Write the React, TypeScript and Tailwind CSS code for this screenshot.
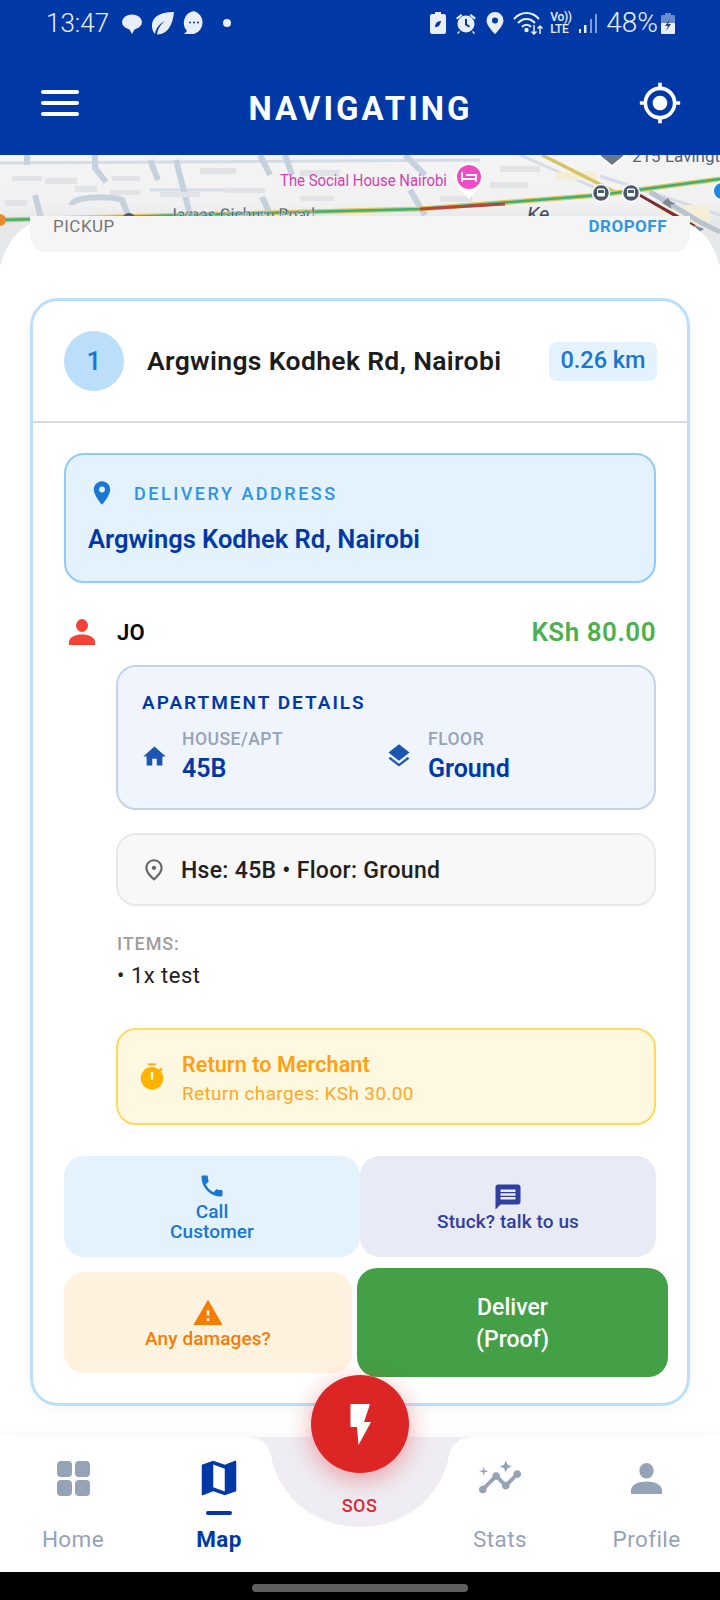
import { MdGpsFixed, MdLocationOn, MdHome, MdLayers, MdOutlinePlace, MdTimer, MdPhone, MdMessage, MdWarning, MdMap, MdInsights } from 'react-icons/md';

function PersonIcon({ className }: { className?: string }) {
  return (
    <svg viewBox="0 0 26 26" className={className} fill="currentColor">
      <ellipse cx="13" cy="6.5" rx="6" ry="6.5" />
      <path d="M0 23c0-5 6.500-7.500 13-7.500S26 18 26 23v3H0z" />
    </svg>
  );
}

function MapBackdrop() {
  return (
    <svg width="720" height="110" viewBox="0 155 720 110" className="absolute left-0 top-0">
      <defs>
        <linearGradient id="shade" x1="0" y1="0" x2="0" y2="1">
          <stop offset="0" stopColor="#f4f4f5" />
          <stop offset="0.45" stopColor="#f1f1f2" />
          <stop offset="0.6" stopColor="#e6e7e9" />
          <stop offset="1" stopColor="#e8e9eb" />
        </linearGradient>
      </defs>
      <rect x="0" y="155" width="720" height="110" fill="url(#shade)" />
      <g stroke="#d5dce5" strokeWidth="3" fill="none">
        <path d="M0 163L480 160" />
        <path d="M150 190H260" />
        <path d="M600 176L720 215" />
        <path d="M520 155L600 190" />
      </g>
      <g stroke="#c5d1dd" strokeWidth="6" fill="none">
        <path d="M27 155V165" />
        <path d="M95 155V168L106 182" />
        <path d="M150 160L158 180" />
        <path d="M176 160L190 215" />
        <path d="M260 155L270 175" />
        <path d="M285 155L292 175" />
        <path d="M35 195L42 222" />
        <path d="M410 190L425 215" />
        <path d="M72 205C72 196 110 196 122 200L128 215" />
        <path d="M262 197L272 218" />
        <path d="M405 155L425 175" />
      </g>
      <g fill="#e2e3e6">
        <rect x="12" y="176" width="30" height="5" />
        <rect x="45" y="178" width="32" height="6" />
        <rect x="75" y="186" width="22" height="6" />
        <rect x="112" y="176" width="28" height="5" />
        <rect x="110" y="190" width="30" height="5" />
        <rect x="160" y="192" width="40" height="5" />
        <rect x="200" y="168" width="36" height="6" />
        <rect x="225" y="188" width="40" height="5" />
        <rect x="5" y="200" width="22" height="6" />
        <rect x="300" y="170" width="40" height="6" />
        <rect x="300" y="196" width="34" height="5" />
        <rect x="440" y="196" width="32" height="6" />
        <rect x="490" y="182" width="38" height="6" />
        <rect x="500" y="166" width="40" height="6" />
      </g>
      <rect x="555" y="172" width="42" height="8" fill="#f4eed9" />
      <rect x="660" y="205" width="50" height="20" fill="#f4eed9" />
      <path d="M542 155L617 193" stroke="#d6c364" strokeWidth="3.500" fill="none" />
      <path d="M650 192L700 222L720 232" stroke="#b9c4d0" strokeWidth="5" fill="none" />
      <path d="M640 195L695 226" stroke="#7c2d33" strokeWidth="2.500" fill="none" />
      <path d="M630 190L685 222" stroke="#7c2d33" strokeWidth="2" fill="none" />
      <path d="M0 220L420 209L600 195L720 179" stroke="#e7c558" strokeWidth="5" fill="none" />
      <path d="M0 220L420 209L600 195L720 179" stroke="#35b27d" strokeWidth="2.500" fill="none" />
      <path d="M420 209L505 204" stroke="#b9433f" strokeWidth="3" fill="none" />
      <circle cx="0" cy="220" r="6" fill="#e8892c" />
      <text x="280" y="186" textLength="167" lengthAdjust="spacingAndGlyphs" fontFamily="Roboto, sans-serif" fontSize="17" fill="#d23fb2">The Social House Nairobi</text>
      <circle cx="469" cy="177" r="14" fill="#fff" />
      <path d="M457 186L469 199L481 186z" fill="#fff" />
      <circle cx="469" cy="177" r="12" fill="#f04cc6" />
      <path d="M462 172v10M462 179h14v3M466 175h10v4" stroke="#fff" strokeWidth="1.800" fill="none" />
      <text x="168" y="221" textLength="147" lengthAdjust="spacingAndGlyphs" fontFamily="Roboto, sans-serif" fontSize="18" fontWeight="500" fill="#3c5679" stroke="#fff" strokeWidth="0.400">James Gichuru Road</text>
      <circle cx="129" cy="220" r="7" fill="#4a5a6c" />
      <text x="527" y="221" fontFamily="Roboto, sans-serif" fontSize="20" fontStyle="italic" fill="#3c4a5c">Ke</text>
      <text x="632" y="162" fontFamily="Roboto, sans-serif" fontSize="17" fill="#566472">215 Lavington</text>
      <path d="M598 150h28v6l-14 12l-14-12z" fill="#fff" />
      <path d="M601 150h22v6l-11 9l-11-9z" fill="#6b7885" />
      {[601, 631].map((cx) => (
        <g key={cx}>
          <circle cx={cx} cy="193" r="8.500" fill="#4a5a6c" stroke="#fff" strokeWidth="1.500" />
          <rect x={cx - 4} y="188.500" width="8" height="8" rx="1.500" fill="#fff" />
          <rect x={cx - 3} y="190" width="6" height="3" fill="#4a5a6c" />
        </g>
      ))}
      <circle cx="722" cy="191" r="9" fill="#1e88e5" stroke="#fff" strokeWidth="2" />
      <path d="M662 203l6-5l2 3l6 3l-6 1l2 4z" fill="#7c8894" />
      <path d="M694 225l10 4l-5 3z" fill="#7c8894" />
    </svg>
  );
}

function StatusBar() {
  return (
    <div className="flex h-[46px] items-center justify-between pl-[46px] pr-[45px] text-[#e9effa]">
      <div className="flex items-center">
        <span className="text-[26px] font-light leading-none">13:47</span>
        <svg width="22" height="22" viewBox="0 0 22 22" className="ml-[12px]" fill="currentColor">
          <ellipse cx="11" cy="10" rx="10" ry="7.500" />
          <path d="M7 15h8l-4 7z" />
        </svg>
        <svg width="24" height="24" viewBox="0 0 24 24" className="ml-[8px]" fill="currentColor">
          <path d="M23 1C12 1 1 4 1 15c0 3 1 6 3 8 1-6 5-11 10-13-4 3-7 7-8 13.500C16 24 22 14 23 1z" />
        </svg>
        <svg width="26" height="26" viewBox="0 0 26 26" className="ml-[6px]">
          <path d="M13 1a12 12 0 0 1 0 23H3l3-3a12 12 0 0 1 7-20z" fill="currentColor" />
          <circle cx="9" cy="12.500" r="1" fill="#0039a6" />
          <circle cx="13" cy="12.500" r="1" fill="#0039a6" />
          <circle cx="17" cy="12.500" r="1" fill="#0039a6" />
        </svg>
        <span className="ml-[16px] h-[8px] w-[8px] rounded-full bg-[#e9effa]" />
      </div>
      <div className="flex items-center">
        <svg width="16" height="22" viewBox="0 0 16 22" fill="currentColor">
          <path d="M5 0h6v2h3a2 2 0 0 1 2 2v16a2 2 0 0 1-2 2H2a2 2 0 0 1-2-2V4a2 2 0 0 1 2-2h3z" />
          <path d="M5 15c0-4 3-6 6-6-1 4-2 6-6 6z" fill="#0039a6" />
        </svg>
        <svg width="22" height="22" viewBox="0 0 22 22" className="ml-[9px]" fill="currentColor">
          <circle cx="11" cy="12" r="8.500" />
          <path d="M1 6l5-4 1.500 1.500-5 4zM21 6l-5-4-1.500 1.500 5 4zM4 19l-2 2 1 1 2-2zM18 19l2 2-1 1-2-2z" />
          <path d="M10 7h2v5l3 2-1 1.500-4-2.500z" fill="#0039a6" />
        </svg>
        <svg width="18" height="22" viewBox="0 0 18 22" className="ml-[9px]">
          <path d="M9 0a8.500 8.500 0 0 1 8.500 8.500C17.500 14 9 22 9 22S.5 14 .5 8.500A8.500 8.500 0 0 1 9 0z" fill="currentColor" />
          <circle cx="9" cy="8.500" r="3" fill="#0039a6" />
        </svg>
        <svg width="31" height="24" viewBox="0 0 31 24" className="ml-[9px]" fill="none" stroke="currentColor" strokeWidth="2">
          <path d="M1 8C8 0 19 0 26 8" />
          <path d="M5 12C10 6.500 17 6.500 22 12" />
          <path d="M9 16C11.500 13 15.500 13 18 16" />
          <circle cx="13.500" cy="19" r="1.200" fill="currentColor" />
          <path d="M21 14v9M18.500 20.500l2.500 2.500 2.500-2.500M27 23v-8M24.500 17.500l2.500-2.500 2.500 2.500" strokeWidth="1.500" />
        </svg>
        <div className="ml-[6px] flex w-[22px] flex-col text-[12px] font-medium leading-[12px] tracking-[-0.3px]">
          <span>Vo))</span>
          <span>LTE</span>
        </div>
        <svg width="19" height="22" viewBox="0 0 19 22" className="ml-[7px]" fill="currentColor">
          <rect x="0" y="17" width="2" height="4" />
          <rect x="5" y="13" width="2.500" height="8" />
          <rect x="11" y="7" width="2" height="14" opacity="0.550" />
          <rect x="16" y="2" width="2" height="19" opacity="0.550" />
        </svg>
        <span className="ml-[8px] text-[28px] font-light leading-none">48%</span>
        <svg width="14" height="22" viewBox="0 0 14 22" className="ml-[3px]">
          <path d="M4 1h6v2h3a1 1 0 0 1 1 1v17a1 1 0 0 1-1 1H1a1 1 0 0 1-1-1V4a1 1 0 0 1 1-1h3z" fill="#e9effa" opacity="0.450" />
          <path d="M0 11h14v10a1 1 0 0 1-1 1H1a1 1 0 0 1-1-1z" fill="#e9effa" />
          <path d="M9 7L4 14h3l-2 5 5-7H7z" fill="#33415c" />
        </svg>
      </div>
    </div>
  );
}

function ActionButton({ bg, color, icon, children, className }: { bg: string; color: string; icon: React.ReactNode; children: React.ReactNode; className?: string }) {
  return (
    <button className={`flex h-[101px] shrink-0 flex-col items-center justify-center rounded-[20px] text-[19px] font-medium leading-[20px] tracking-[0.1px] ${bg} ${color} ${className ?? ''}`}>
      {icon}
      <span className="text-center">{children}</span>
    </button>
  );
}

function NavItem({ icon, label, active }: { icon: React.ReactNode; label: string; active?: boolean }) {
  return (
    <div className="flex flex-col items-center">
      <div className="mt-[1px] flex h-[36px] items-center justify-center">{icon}</div>
      <div className={`mt-[15px] h-[4px] w-[26px] rounded-full ${active ? 'bg-[#0039a6]' : ''}`} />
      <span className={`mt-[10px] text-[22.5px] leading-[28px] tracking-[0.4px] ${active ? 'font-bold text-[#0039a6]' : 'text-[#94a3b8]'}`}>{label}</span>
    </div>
  );
}

export default function App() {
  return (
    <div className="relative flex h-[1600px] w-[720px] flex-col overflow-hidden bg-white font-['Roboto',sans-serif]">
      {/* HEADER */}
      <div className="relative z-20 h-[155px] shrink-0 bg-[#0039a6] text-white">
        <StatusBar />
        <div className="mt-[21px] flex h-[72px] items-center justify-between pl-[41px] pr-[38px]">
          <div className="flex w-[38px] flex-col gap-[7px]">
            <span className="h-[4px] rounded-full bg-white" />
            <span className="h-[4px] rounded-full bg-white" />
            <span className="h-[4px] rounded-full bg-white" />
          </div>
          <h1 className="ml-[4px] mt-[10px] text-[33px] font-bold leading-none tracking-[3px]">NAVIGATING</h1>
          <MdGpsFixed className="h-[44px] w-[44px]" />
        </div>
      </div>

      {/* MAP STRIP */}
      <div className="relative h-[61px] shrink-0">
        <MapBackdrop />
      </div>

      {/* SHEET */}
      <div className="relative z-10 min-h-0 flex-1 rounded-t-[60px] bg-white">
        <div className="mx-[30px] flex h-[36px] justify-between rounded-b-[16px] bg-[#f5f5f5] pl-[23px] pr-[23px] text-[17px] leading-[20px] tracking-[0.5px]">
          <span className="text-[#757575]">PICKUP</span>
          <span className="font-bold text-[#2f97e6]">DROPOFF</span>
        </div>

        <div className="mx-[30px] mt-[46px] h-[1108px] rounded-[28px] border-[3px] border-[#bbdefb] bg-white shadow-[0_4px_16px_rgba(0,0,0,0.04)]">
          {/* STOP HEADER */}
          <div className="flex h-[122px] items-center border-b-2 border-[#d9d9e0] pl-[31px] pr-[30px]">
            <div className="flex h-[60px] w-[60px] shrink-0 items-center justify-center rounded-full bg-[#bbdefb] text-[26px] font-medium text-[#1976d2]">1</div>
            <span className="ml-[23px] flex-1 whitespace-nowrap text-[26.500px] font-semibold tracking-[0.35px] text-[#1c1c1c]">Argwings Kodhek Rd, Nairobi</span>
            <span className="flex h-[39px] w-[108px] shrink-0 items-center justify-center rounded-[8px] bg-[#e3f2fd] text-[23.500px] font-medium text-[#1976d2]">0.26 km</span>
          </div>

          <div className="px-[31px]">
            {/* DELIVERY ADDRESS */}
            <div className="mt-[30px] h-[130px] rounded-[20px] border-2 border-[#90caf9] bg-[#e3f2fd] pl-[22px] pt-[24px]">
              <div className="flex items-center">
                <MdLocationOn className="h-[28px] w-[28px] text-[#1976d2]" />
                <span className="ml-[18px] text-[18px] font-medium tracking-[2.500px] text-[#2b95e9]">DELIVERY ADDRESS</span>
              </div>
              <p className="mt-[17px] text-[25.500px] font-semibold leading-[30px] text-[#0039a6]">Argwings Kodhek Rd, Nairobi</p>
            </div>

            {/* CUSTOMER */}
            <div className="mt-[32px] flex h-[34px] items-center justify-between">
              <div className="flex items-center">
                <PersonIcon className="ml-[5px] h-[26px] w-[26px] text-[#f44336]" />
                <span className="ml-[22px] text-[22px] font-semibold tracking-[0.3px] text-black">JO</span>
              </div>
              <span className="text-[26px] font-semibold tracking-[0.5px] text-[#4caf50]">KSh 80.00</span>
            </div>

            <div className="ml-[52px]">
              {/* APARTMENT */}
              <div className="mt-[16px] h-[145px] rounded-[20px] border-2 border-[#c5d3ea] bg-[#f0f4fd] pl-[24px] pt-[25px]">
                <p className="text-[19px] font-semibold leading-[22px] tracking-[2px] text-[#0039a6]">APARTMENT DETAILS</p>
                <div className="mt-[13px] flex">
                  <div className="flex w-[245px] items-center">
                    <MdHome className="-ml-[1px] h-[27px] w-[27px] text-[#1b56b0]" />
                    <div className="ml-[14px]">
                      <p className="text-[17.500px] font-medium leading-[24px] tracking-[0.5px] text-[#94a3b8]">HOUSE/APT</p>
                      <p className="mt-[2px] text-[25px] font-semibold leading-[32px] text-[#0039a6]">45B</p>
                    </div>
                  </div>
                  <div className="flex items-center">
                    <MdLayers className="-ml-[2px] h-[28px] w-[28px] text-[#1b56b0]" />
                    <div className="ml-[15px]">
                      <p className="text-[17.500px] font-medium leading-[24px] tracking-[0.5px] text-[#94a3b8]">FLOOR</p>
                      <p className="mt-[2px] text-[25px] font-semibold leading-[32px] text-[#0039a6]">Ground</p>
                    </div>
                  </div>
                </div>
              </div>

              {/* NOTE */}
              <div className="mt-[23px] flex h-[73px] items-center rounded-[20px] border-2 border-[#e9e9e9] bg-[#f8f8f8] pl-[23px]">
                <MdOutlinePlace className="h-[26px] w-[26px] text-[#666666]" />
                <span className="ml-[14px] mt-[3px] text-[23px] font-medium tracking-[0.3px] text-[#212121]">Hse: 45B • Floor: Ground</span>
              </div>

              {/* ITEMS */}
              <p className="ml-[1px] mt-[26px] text-[18px] font-medium leading-[24px] tracking-[0.9px] text-[#9e9e9e]">ITEMS:</p>
              <p className="ml-[1px] mt-[6px] text-[22px] leading-[28px] tracking-[0.5px] text-[#212121]">• 1x test</p>

              {/* RETURN */}
              <div className="mt-[38px] flex h-[97px] items-center rounded-[20px] border-2 border-[#ffd95e] bg-[#fff8e1] pl-[19px]">
                <MdTimer className="h-[30px] w-[30px] text-[#ffb300]" />
                <div className="ml-[15px] mt-[3px]">
                  <p className="text-[21.500px] font-semibold leading-[28px] tracking-[0.1px] text-[#ffa010]">Return to Merchant</p>
                  <p className="mt-[3px] text-[19px] leading-[24px] tracking-[0.35px] text-[#ffa726]">Return charges: KSh 30.00</p>
                </div>
              </div>
            </div>

            {/* ACTIONS */}
            <div className="mt-[31px] flex">
              <ActionButton bg="bg-[#e3f2fd]" color="text-[#1976d2]" className="w-[296px]" icon={<MdPhone className="mb-[2px] h-[28px] w-[28px]" />}>
                Call<br />Customer
              </ActionButton>
              <ActionButton bg="bg-[#e8eaf6]" color="text-[#303f9f]" className="w-[296px]" icon={<MdMessage className="h-[30px] w-[30px]" />}>
                Stuck? talk to us
              </ActionButton>
            </div>
            <div className="mt-[11px] flex items-center">
              <ActionButton bg="bg-[#fff3e0]" color="text-[#f57c00]" className="w-[288px]" icon={<MdWarning className="h-[32px] w-[32px]" />}>
                Any damages?
              </ActionButton>
              <button className="ml-[5px] h-[109px] w-[311px] shrink-0 rounded-[20px] bg-[#43a047] pt-[2px] text-[23px] font-medium leading-[32px] text-white">
                Deliver<br />(Proof)
              </button>
            </div>
          </div>
        </div>
      </div>

      {/* BOTTOM NAV */}
      <div className="relative z-20 h-[135px] shrink-0 bg-white shadow-[0_-6px_14px_rgba(0,0,0,0.025)]">
        <svg width="720" height="90" viewBox="0 0 720 90" className="absolute left-0 top-0">
          <path d="M245 0C262 0 269 9 271 18C278 60 315 90 360 90C405 90 442 60 449 18C451 9 458 0 475 0Z" fill="#efecf3" />
        </svg>
        <div className="relative grid grid-cols-[146px_146px_135px_146px_147px] pt-[22px]">
          <NavItem
            label="Home"
            icon={
              <div className="grid grid-cols-2 gap-[3px]">
                <span className="h-[16px] w-[15px] rounded-[4px] bg-[#94a3b8]" />
                <span className="h-[16px] w-[15px] rounded-[4px] bg-[#94a3b8]" />
                <span className="h-[16px] w-[15px] rounded-[4px] bg-[#94a3b8]" />
                <span className="h-[16px] w-[15px] rounded-[4px] bg-[#94a3b8]" />
              </div>
            }
          />
          <NavItem label="Map" active icon={<MdMap className="h-[46px] w-[46px] text-[#0039a6]" />} />
          <div className="flex justify-center pt-[37px]">
            <span className="text-[18px] font-medium leading-[20px] tracking-[0.4px] text-[#d32f2f]">SOS</span>
          </div>
          <NavItem label="Stats" icon={<MdInsights className="h-[46px] w-[46px] text-[#94a3b8]" />} />
          <NavItem label="Profile" icon={<PersonIcon className="h-[31px] w-[31px] text-[#94a3b8]" />} />
        </div>
        {/* SOS BUTTON */}
        <button className="absolute left-[311px] top-[-62px] flex h-[98px] w-[98px] items-center justify-center rounded-full bg-[#dc2626] text-white shadow-[0_6px_24px_rgba(220,38,38,0.4)]">
          <svg width="21" height="41" viewBox="0 0 21 41" fill="currentColor">
            <path d="M.5 1Q.5 0 1.500 0H19Q20 0 19.700 1L14 18H21L8.500 41L7 23H1.500Q.5 23 .5 22Z" />
          </svg>
        </button>
      </div>

      {/* ANDROID HOME BAR */}
      <div className="flex h-[28px] shrink-0 items-center justify-center bg-black pt-[3px]">
        <span className="h-[8px] w-[216px] rounded-full bg-[#5f5f5f]" />
      </div>
    </div>
  );
}
